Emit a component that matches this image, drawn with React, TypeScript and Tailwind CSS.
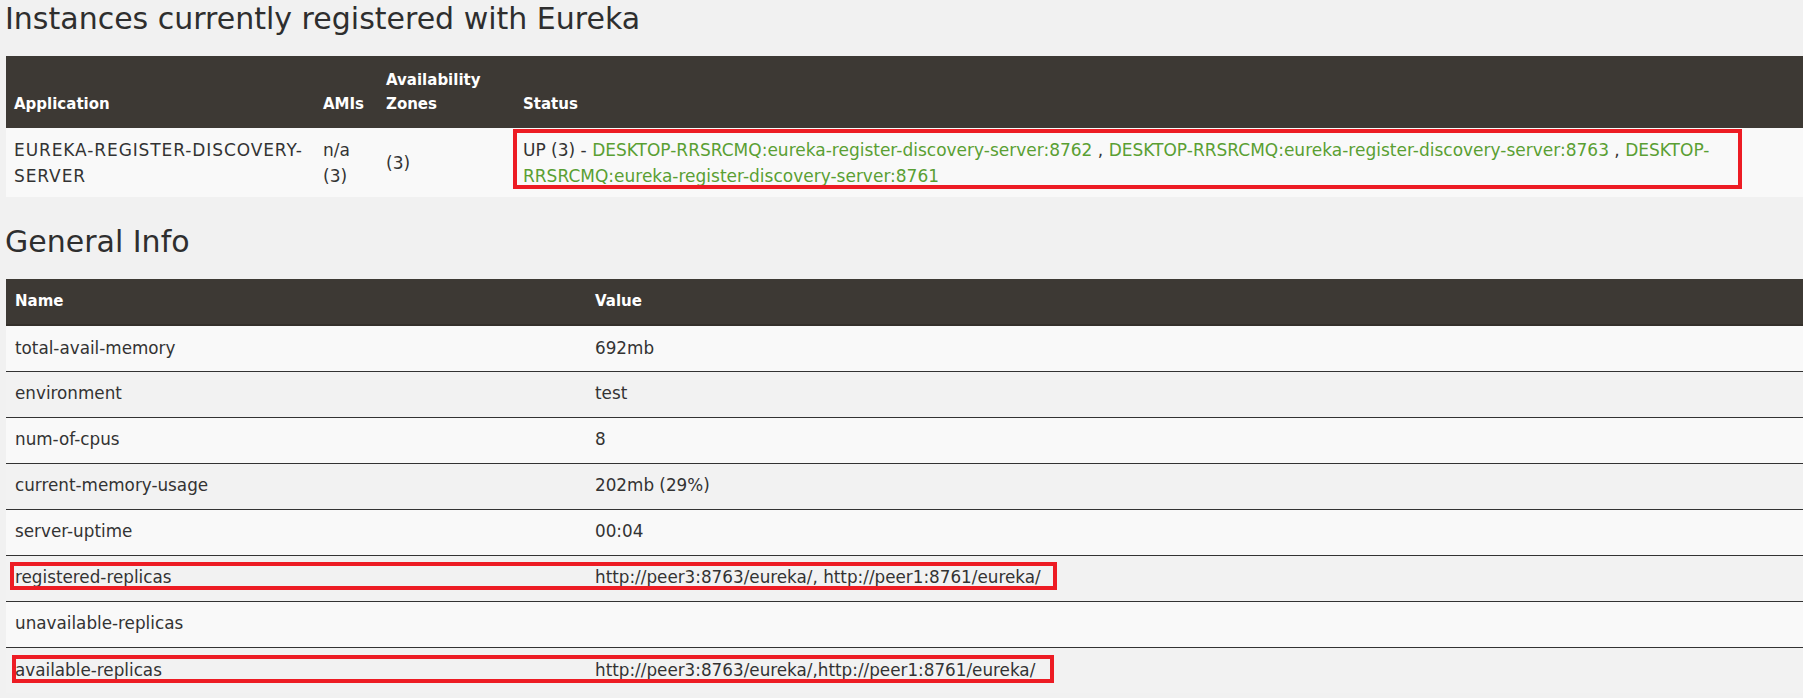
import React from 'react';

const green = 'text-[#5a9f33]';

const generalInfo: [string, string][] = [
  ['total-avail-memory', '692mb'],
  ['environment', 'test'],
  ['num-of-cpus', '8'],
  ['current-memory-usage', '202mb (29%)'],
  ['server-uptime', '00:04'],
  ['registered-replicas', 'http://peer3:8763/eureka/, http://peer1:8761/eureka/'],
  ['unavailable-replicas', ''],
  ['available-replicas', 'http://peer3:8763/eureka/,http://peer1:8761/eureka/'],
];

export default function App() {
  return (
    <div className="relative w-full h-[698px] overflow-hidden bg-[#f1f1f1] text-[#333] [font-family:'DejaVu_Sans',sans-serif]">
      {/* Instances */}
      <h1 className="ml-[5px] pt-[1px] mb-[19px] text-[30px] leading-[36px] font-normal text-[#2e2e2e]">
        Instances currently registered with Eureka
      </h1>
      <table className="ml-[6px] w-[calc(100%-6px)] table-fixed border-collapse">
        <colgroup>
          <col className="w-[309px]" />
          <col className="w-[63px]" />
          <col className="w-[137px]" />
          <col />
        </colgroup>
        <thead>
          <tr className="h-[72px] bg-[#3d3934] text-white text-left">
            <th className="align-bottom px-2 pb-[12px] text-[15px] leading-[24px] font-bold">Application</th>
            <th className="align-bottom px-2 pb-[12px] text-[15px] leading-[24px] font-bold">AMIs</th>
            <th className="align-bottom px-2 pb-[12px] text-[15px] leading-[24px] font-bold">Availability Zones</th>
            <th className="align-bottom px-2 pb-[12px] text-[15px] leading-[24px] font-bold">Status</th>
          </tr>
        </thead>
        <tbody>
          <tr className="h-[69px] bg-[#f9f9f9] text-[17px] leading-[26px]">
            <td className="align-middle px-2 py-2 tracking-[0.9px]">EUREKA-REGISTER-DISCOVERY-SERVER</td>
            <td className="align-middle px-2 py-2">n/a (3)</td>
            <td className="align-middle px-2 py-2">(3)</td>
            <td className="align-middle px-2 py-2">
              <b className="font-normal">UP</b> (3) -{' '}
              <a className={green}>DESKTOP-RRSRCMQ:eureka-register-discovery-server:8762</a> ,{' '}
              <a className={green}>DESKTOP-RRSRCMQ:eureka-register-discovery-server:8763</a> ,{' '}
              <a className={green}>DESKTOP-RRSRCMQ:eureka-register-discovery-server:8761</a>
            </td>
          </tr>
        </tbody>
      </table>

      {/* General Info */}
      <h1 className="ml-[5px] mt-[27px] mb-[19px] text-[30px] leading-[36px] font-normal text-[#2e2e2e]">
        General Info
      </h1>
      <table className="ml-[6px] w-[calc(100%-6px)] table-fixed border-collapse">
        <colgroup>
          <col className="w-[580px]" />
          <col />
        </colgroup>
        <thead>
          <tr className="h-[46px] bg-[#3d3934] text-white text-left border-b-2 border-[#34302b]">
            <th className="align-middle pl-[9px] text-[15px] font-bold">Name</th>
            <th className="align-middle pl-[9px] text-[15px] font-bold">Value</th>
          </tr>
        </thead>
        <tbody>
          {generalInfo.map(([name, value], i) => (
            <tr
              key={name}
              className={`h-[46px] text-[16.8px] ${i % 2 === 0 ? 'bg-[#f9f9f9]' : 'bg-[#f2f2f2]'} ${
                i < generalInfo.length - 1 ? 'border-b border-[#333]' : ''
              }`}
            >
              <td className="align-middle pl-[9px]">{name}</td>
              <td className="align-middle pl-[9px]">{value}</td>
            </tr>
          ))}
        </tbody>
      </table>

      {/* annotation boxes */}
      <div className="absolute left-[513px] top-[129px] w-[1229px] h-[60px] border-4 border-[#ed1c24] pointer-events-none" />
      <div className="absolute left-[10px] top-[562px] w-[1047px] h-[28px] border-4 border-[#ed1c24] pointer-events-none" />
      <div className="absolute left-[12px] top-[655px] w-[1042px] h-[28px] border-4 border-[#ed1c24] pointer-events-none" />
    </div>
  );
}
